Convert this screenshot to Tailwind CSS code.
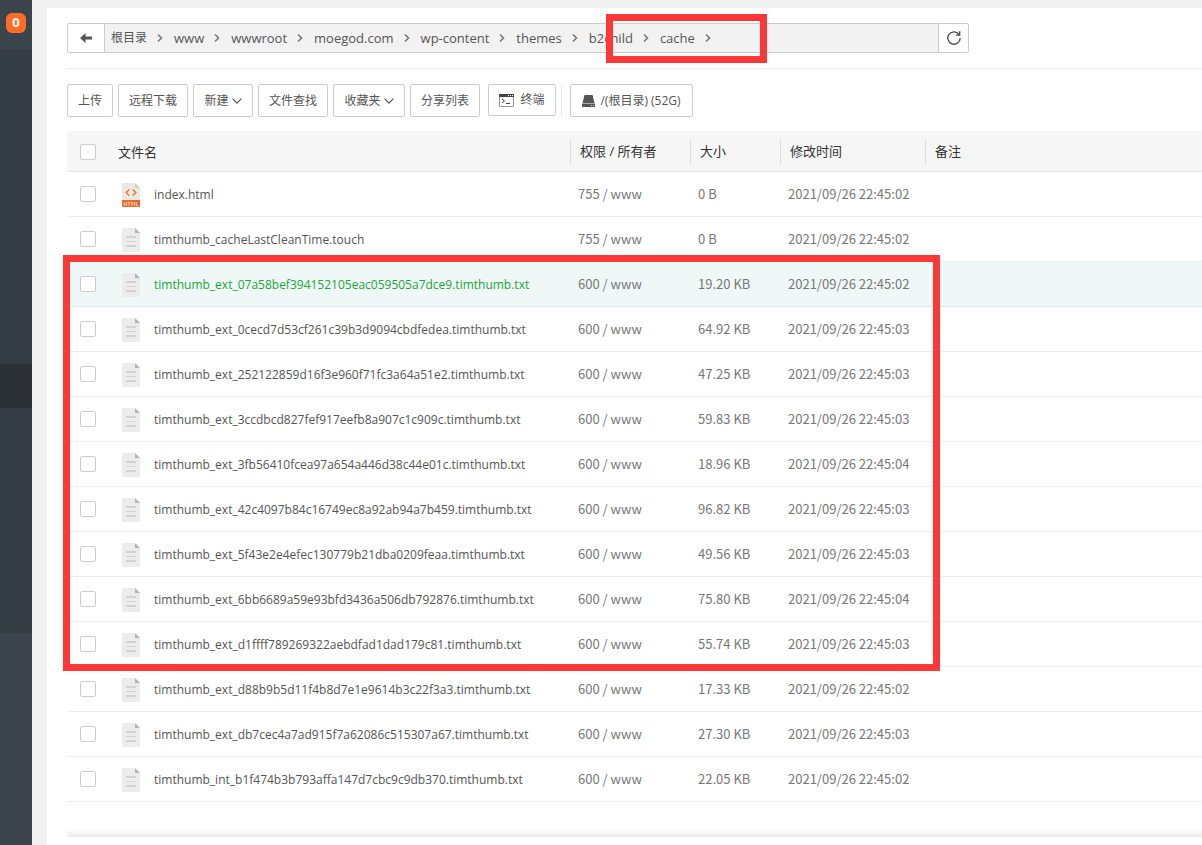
<!DOCTYPE html>
<html lang="zh-CN">
<head>
<meta charset="utf-8">
<meta name="viewport" content="width=device-width, initial-scale=1">
<title>文件管理</title>
<script src="https://cdn.jsdelivr.net/npm/@tailwindcss/browser@4"></script>
</head>
<body class="relative flex min-h-screen overflow-x-hidden bg-[#f1f1f1] font-['Open_Sans','Noto_Sans_CJK_SC',sans-serif] text-xs text-[#555]">

<svg class="hidden" aria-hidden="true">
  <symbol id="file-txt" viewBox="0 0 18 24">
    <path d="M1 0h12l5 5v18a1 1 0 0 1-1 1H1a1 1 0 0 1-1-1V1a1 1 0 0 1 1-1z" fill="#ececec"/>
    <path d="M13 0l5 5h-5z" fill="#b4b4b4"/>
    <path d="M4 8h10v2H4zM4 13h10v1H4zM4 17h10v2H4z" fill="#d3d3d3"/>
  </symbol>
  <symbol id="file-html" viewBox="0 0 18 24">
    <path d="M1 0h12l5 5v12H0V1a1 1 0 0 1 1-1z" fill="#e9e9df"/>
    <path d="M13 0l5 5h-5z" fill="#d2d2c6"/>
    <path d="M7.2 6.5L4.2 9.5l3 3M10.8 6.5l3 3-3 3" fill="none" stroke="#f0703c" stroke-width="1.4"/>
    <path d="M0 17h18v6a1 1 0 0 1-1 1H1a1 1 0 0 1-1-1z" fill="#ec6630"/>
    <path d="M2 19v4M4.500 19v4M2 21h2.500M5.500 19.400h3M7 19.400V23M9.700 23v-4l1.600 2.500L12.900 19v4M14.500 19v3.600h2" fill="none" stroke="#fbd9c9" stroke-width=".8"/>
  </symbol>
  <symbol id="chevron-right" viewBox="0 0 6 10">
    <path d="M1 1.500l3.500 3.500L1 8.500" fill="none" stroke="#777" stroke-width="1.600"/>
  </symbol>
  <symbol id="chevron-down" viewBox="0 0 10 6">
    <path d="M.6.7L5 5.100 9.400.7" fill="none" stroke="#555" stroke-width="1.200"/>
  </symbol>
</svg>

<aside class="flex w-8 shrink-0 flex-col bg-[#3c444d]">
  <div class="flex h-[49px] justify-center pt-[13px]">
    <span class="flex size-5 items-center justify-center rounded-md bg-[#ff6c26] text-[13px] font-bold text-white">0</span>
  </div>
  <div class="h-[315px] bg-[#353d44]"></div>
  <div class="h-11 bg-[#2c3138]"></div>
  <div class="h-[225px] bg-[#353d44]"></div>
</aside>

<main class="ml-[15px] mt-2 min-w-0 flex-1 bg-white pl-5 pt-[15px]">
  <div class="flex h-[30px] w-[902px] max-w-full">
    <button type="button" aria-label="返回" class="flex w-[38px] items-center justify-center rounded-l-xs border border-[#ccc] bg-white">
      <svg class="h-[10px] w-3" viewBox="0 0 12 10"><path d="M0 5l5.500-5v3.500H12v3H5.500V10z" fill="#555"/></svg>
    </button>
    <nav aria-label="路径" class="flex min-w-0 flex-1 items-center border-y border-[#ccc] bg-[#f2f2f2] pl-[6px] pt-px">
      <ol id="path" class="flex items-center gap-[11px]"></ol>
    </nav>
    <button type="button" aria-label="刷新" class="flex w-[31px] items-center justify-center rounded-r-xs border border-[#ccc] bg-white">
      <svg class="size-[14px]" viewBox="0 0 14 14" fill="none" stroke="#444" stroke-width="1.300"><path d="M12.300 3.800A6.200 6.200 0 1 0 13.200 7"/><path d="M12.700.3v3.800H8.900"/></svg>
    </button>
  </div>

  <div class="mt-[15px] border-t border-[#ebebeb] pt-[15px]">
    <div class="flex items-start gap-[5px] whitespace-nowrap">
      <button type="button" class="h-[33px] w-[46px] rounded-xs border border-[#ccc] bg-white">上传</button>
      <button type="button" class="h-[33px] w-[70px] rounded-xs border border-[#ccc] bg-white">远程下载</button>
      <button type="button" class="flex h-[33px] w-[60px] items-center justify-center gap-[3px] rounded-xs border border-[#ccc] bg-white">新建<svg class="h-[6px] w-[10px]"><use href="#chevron-down"/></svg></button>
      <button type="button" class="h-[33px] w-[70px] rounded-xs border border-[#ccc] bg-white">文件查找</button>
      <button type="button" class="flex h-[33px] w-[72px] items-center justify-center gap-[3px] rounded-xs border border-[#ccc] bg-white">收藏夹<svg class="h-[6px] w-[10px]"><use href="#chevron-down"/></svg></button>
      <button type="button" class="h-[33px] w-[70px] rounded-xs border border-[#ccc] bg-white">分享列表</button>
      <div class="flex gap-[5px] pl-[3px]">
        <button type="button" class="flex h-8 w-[68px] items-center justify-center gap-[6px] rounded-xs border border-[#ccc] bg-white">
          <svg class="h-[13px] w-[15px]" viewBox="0 0 15 13"><path d="M0 0h15v3H0z" fill="#444"/><path d="M9 1h1v1H9zM11 1h1v1h-1zM13 1h1v1h-1z" fill="#fff"/><path d="M.5 3v9.500h14V3" fill="none" stroke="#999"/><path d="M3 5l2.500 2L3 9M7 9.500h4" fill="none" stroke="#444"/></svg>终端
        </button>
        <div class="h-[33px] border-l border-[#e8e8e8] pl-2">
          <button type="button" class="flex h-[33px] w-[123px] items-center justify-center gap-[5px] rounded-xs border border-[#ccc] bg-white">
            <svg class="h-3 w-[13px]" viewBox="0 0 13 12" fill="#555"><path d="M2.500 0h8L12.500 8H.5z"/><path d="M0 8.500h13V12H0z"/><path d="M9 10h1v1H9zM11 10h1v1h-1z" fill="#ddd"/></svg>/(根目录) (52G)
          </button>
        </div>
      </div>
    </div>
  </div>

  <table class="mt-[14px] w-full table-fixed border-separate border-spacing-0 text-left">
    <colgroup>
      <col class="w-[42px]"><col class="w-[461px]"><col class="w-[120px]"><col class="w-[90px]"><col class="w-[145px]"><col>
    </colgroup>
    <thead class="bg-[#f6f6f6] text-[13px] text-[#333]">
      <tr class="h-[41px]">
        <th class="border-b border-[#e8e8e8] pl-[13px] pt-px"><input type="checkbox" aria-label="全选" class="block size-4 appearance-none rounded-xs border border-[#ccc] bg-white"></th>
        <th class="border-b border-[#e8e8e8] pl-[9px] pt-[3px] font-normal">文件名</th>
        <th class="border-b border-[#e8e8e8] pt-px font-normal"><div class="border-l border-[#ddd] pl-[9px] leading-[25px]">权限 / 所有者</div></th>
        <th class="border-b border-[#e8e8e8] pt-px font-normal"><div class="border-l border-[#ddd] pl-[9px] leading-[25px]">大小</div></th>
        <th class="border-b border-[#e8e8e8] pt-px font-normal"><div class="border-l border-[#ddd] pl-[9px] leading-[25px]">修改时间</div></th>
        <th class="border-b border-[#e8e8e8] pt-px font-normal"><div class="border-l border-[#ddd] pl-[9px] leading-[25px]">备注</div></th>
      </tr>
    </thead>
    <tbody id="files" class="text-[#777]"></tbody>
  </table>
  <div class="mt-[27px] h-2 bg-linear-to-b from-white to-[#ececec]"></div>
</main>

<div class="pointer-events-none absolute left-[606px] top-[14px] h-[49px] w-[161px] border-[7px] border-[#fc3737]"></div>
<div class="pointer-events-none absolute left-[63px] top-[255px] h-[416px] w-[877px] border-[7px] border-[#fc3737]"></div>

<script>
  const path = ['根目录', 'www', 'wwwroot', 'moegod.com', 'wp-content', 'themes', 'b2child', 'cache'];
  document.getElementById('path').innerHTML = path.map((name, i) => `
    <li class="flex items-center gap-[10px]"><a href="#" class="${i ? 'text-[13px]' : 'text-xs'}">${name}</a><svg class="h-[10px] w-[6px]"><use href="#chevron-right"/></svg></li>`).join('');

  const files = [
    ['index.html', 755, '0 B', '02'],
    ['timthumb_cacheLastCleanTime.touch', 755, '0 B', '02'],
    ['timthumb_ext_07a58bef394152105eac059505a7dce9.timthumb.txt', 600, '19.20 KB', '02'],
    ['timthumb_ext_0cecd7d53cf261c39b3d9094cbdfedea.timthumb.txt', 600, '64.92 KB', '03'],
    ['timthumb_ext_252122859d16f3e960f71fc3a64a51e2.timthumb.txt', 600, '47.25 KB', '03'],
    ['timthumb_ext_3ccdbcd827fef917eefb8a907c1c909c.timthumb.txt', 600, '59.83 KB', '03'],
    ['timthumb_ext_3fb56410fcea97a654a446d38c44e01c.timthumb.txt', 600, '18.96 KB', '04'],
    ['timthumb_ext_42c4097b84c16749ec8a92ab94a7b459.timthumb.txt', 600, '96.82 KB', '03'],
    ['timthumb_ext_5f43e2e4efec130779b21dba0209feaa.timthumb.txt', 600, '49.56 KB', '03'],
    ['timthumb_ext_6bb6689a59e93bfd3436a506db792876.timthumb.txt', 600, '75.80 KB', '04'],
    ['timthumb_ext_d1ffff789269322aebdfad1dad179c81.timthumb.txt', 600, '55.74 KB', '03'],
    ['timthumb_ext_d88b9b5d11f4b8d7e1e9614b3c22f3a3.timthumb.txt', 600, '17.33 KB', '02'],
    ['timthumb_ext_db7cec4a7ad915f7a62086c515307a67.timthumb.txt', 600, '27.30 KB', '03'],
    ['timthumb_int_b1f474b3b793affa147d7cbc9c9db370.timthumb.txt', 600, '22.05 KB', '02'],
  ];
  const active = 2;
  document.getElementById('files').innerHTML = files.map(([name, mode, size, sec], i) => {
    const row = i === active ? 'h-[45px] bg-[#f0f8f7]' : 'h-[45px]';
    const line = i === active ? 'border-[#dcece8]' : 'border-[#efefef]';
    const link = i === active ? 'text-[#20a53a]' : 'text-[#555]';
    const icon = name.endsWith('.html') ? 'file-html' : 'file-txt';
    const cell = "border-b pl-2 font-['Noto_Sans_CJK_SC',sans-serif] text-[13px]";
    return `<tr class="${row}">
      <td class="border-b pl-[13px] ${line}"><input type="checkbox" aria-label="${name}" class="block size-4 appearance-none rounded-xs border border-[#ccc] bg-white"></td>
      <td class="border-b pl-[13px] pt-px ${line}"><div class="flex items-center gap-[14px]"><svg class="h-6 w-[18px] shrink-0"><use href="#${icon}"/></svg><a href="#" class="${link}">${name}</a></div></td>
      <td class="${cell} ${line}">${mode} / www</td>
      <td class="${cell} ${line}">${size}</td>
      <td class="${cell} ${line}">2021/09/26 22:45:${sec}</td>
      <td class="border-b ${line}"></td>
    </tr>`;
  }).join('');
</script>
</body>
</html>
